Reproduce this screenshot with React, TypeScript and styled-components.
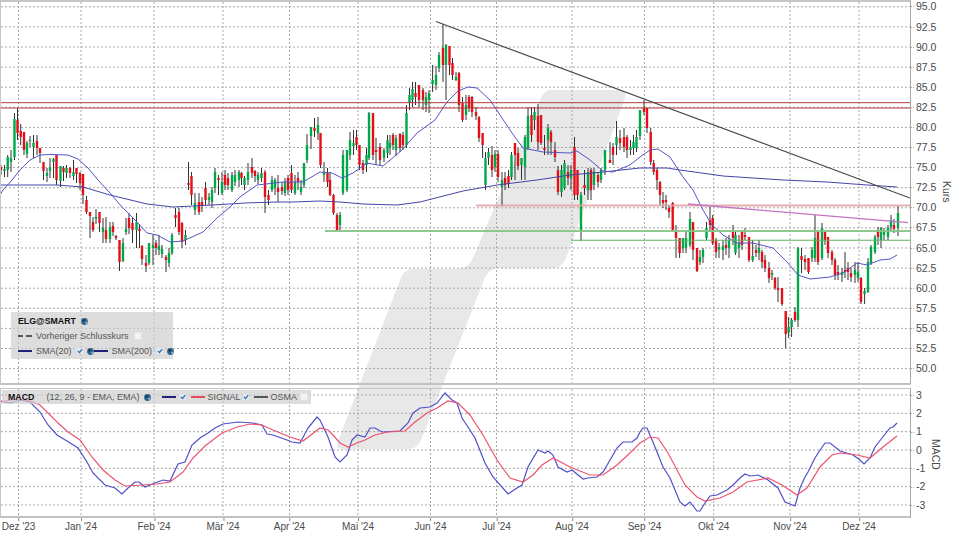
import React from 'react';
import styled, { createGlobalStyle } from 'styled-components';

const G = 1;
const R = 0;

// x, direction, body top, body bottom, wick top, wick bottom (page pixels)
const CANDLES: number[][] = [
  [1,R,167,170,165,175],[4.5,G,169,171,165,177],[7.7,G,157,170,155,177],[11,G,158,162,150,172],[14.5,G,119,157,113,160],
  [17.5,R,120,133,108,140],[20.7,R,131,137,124,145],[24,R,132,150,132,155],[27,G,143,154,141,158],[30,G,140,141,136,147],
  [33.5,G,143,147,135,158],[37,R,141,148,135,155],[40,R,148,153,148,163],[43.5,R,162,171,162,180],[47,G,173,176,168,182],
  [50,G,167,171,158,178],[53.5,G,159,162,158,178],[56.5,R,155,180,155,185],[60.5,G,166,181,166,187],[63.5,R,168,172,166,181],
  [66.5,G,168,173,165,178],[70,R,168,173,167,178],[73.5,G,172,176,160,180],[76.5,R,168,174,168,183],[80,R,173,183,172,190],
  [83,R,174,195,174,204],[86.5,R,200,212,196,214],[90,R,212,216,212,238],[93,R,222,230,217,232],[96,G,217,219,209,224],
  [99.5,R,212,223,212,232],[103,G,228,232,218,243],[106,R,230,239,217,243],[110,G,227,239,222,243],[113,R,226,232,222,236],
  [116,R,236,238,235,240],[119.5,R,240,262,240,271],[123,G,243,261,238,262],[126,G,229,232,218,235],[129,R,218,228,213,234],
  [132.5,R,223,230,217,243],[136.5,G,222,230,213,248],[139.5,R,229,231,224,248],[142,R,246,259,245,265],[146,R,263,266,255,272],
  [149,G,243,263,243,265],[153,G,245,248,235,265],[156,R,243,248,240,255],[159,G,246,250,235,255],[162,G,249,254,245,258],
  [166,R,257,260,255,272],[169,G,253,263,248,267],[172,G,235,253,233,255],[175.5,R,215,218,208,227],[179,R,212,232,208,235],
  [182,R,223,242,222,248],[185.5,G,235,240,230,245],[188.5,R,183,185,162,190],[191.5,R,176,195,172,205],[195,G,203,210,193,215],
  [199,R,202,212,193,215],[202,R,202,206,197,212],[205.5,R,188,200,182,205],[209,G,197,200,193,205],[212,G,190,202,187,208],
  [215,G,172,188,168,193],[218.5,R,178,180,175,195],[222,G,182,193,172,195],[225,R,175,185,170,190],[228,R,178,185,173,190],
  [232,G,175,190,172,192],[235,G,175,182,170,186],[239,G,172,180,170,187],[241.5,R,173,178,172,185],[244.5,G,178,185,176,190],
  [248,G,172,180,163,185],[252,R,167,173,158,178],[255,R,171,176,170,182],[258,G,175,180,172,184],[261.5,G,173,178,168,182],
  [265,R,172,197,170,213],[268.5,R,195,200,190,205],[272,G,180,190,176,192],[275,G,180,188,178,195],[278,R,188,192,175,202],
  [282,R,187,191,182,195],[285,G,182,193,178,196],[288,R,178,190,175,195],[291.5,R,173,190,165,193],[295,G,182,193,175,195],
  [298,R,178,182,172,190],[301,G,187,192,180,195],[304,G,163,185,163,188],[307,G,145,160,134,163],[311,G,127,136,127,149],
  [314.5,R,128,131,118,137],[318,G,125,133,117,140],[320.5,R,133,165,133,168],[324,G,172,175,162,182],[327.5,R,173,182,168,187],
  [330,R,180,195,172,196],[333.5,R,195,213,194,215],[337,R,215,230,213,231],[340,G,215,225,212,231],[343,G,155,193,150,195],
  [347,G,150,190,150,192],[350,G,140,155,132,160],[353.5,G,143,146,130,155],[356.5,R,137,145,130,150],[359.5,R,145,165,145,170],
  [363,R,163,170,160,174],[366.5,G,155,165,148,172],[369,G,113,158,112,160],[373,R,113,155,113,160],[376,R,150,152,138,165],
  [380,R,147,160,143,165],[384,G,150,158,148,162],[387.5,G,140,153,135,158],[390,G,143,148,135,155],[393,R,135,145,133,150],
  [396,G,138,150,135,156],[400,R,134,148,133,152],[403,R,135,145,132,150],[406.5,G,113,145,105,148],[409.5,G,95,103,88,110],
  [412.5,G,89,100,82,107],[415.5,R,93,97,82,105],[419,R,85,100,85,107],[423,R,90,100,88,110],[426,G,97,105,92,112],
  [429,G,93,100,90,113],[432.6,G,80,84,65,92],[436,G,75,85,66,90],[439,G,55,68,52,72],[443,R,48,65,24,82],
  [446,G,45,65,44,100],[449.5,R,46,65,46,75],[452.5,R,63,75,58,80],[456,G,77,80,72,81],[459,R,73,105,72,112],
  [462.5,R,103,120,97,122],[466,G,105,115,95,120],[469,R,97,108,95,112],[472,R,97,112,96,117],[476,R,112,116,107,120],
  [479,R,117,138,116,142],[482.6,R,133,145,133,158],[485.5,G,158,185,152,190],[488.5,G,152,158,148,165],[492,R,155,170,146,177],
  [495,G,154,167,150,172],[498,R,154,177,150,182],[502,G,180,187,172,206],[505,R,178,185,172,190],[508.5,R,176,184,170,188],
  [511.5,G,155,177,152,180],[515,R,143,155,143,180],[518,R,153,166,148,170],[521.5,G,158,165,158,180],[525,G,137,167,135,180],
  [528,G,116,148,107,150],[531.5,R,115,135,107,142],[534.5,G,112,120,107,130],[538,R,116,142,104,150],[541,R,115,143,115,145],
  [544.5,R,148,150,135,155],[548,G,128,140,124,155],[551,R,132,142,130,155],[555,R,150,157,142,162],[558,R,170,192,166,195],
  [561.5,G,170,192,165,197],[564.5,G,163,188,160,190],[568,R,172,178,165,185],[571,G,170,178,165,190],[574.5,R,147,195,137,200],
  [577.5,R,170,195,170,200],[581,G,195,230,192,241],[584.5,R,185,188,170,195],[588,G,172,190,168,200],[591,R,170,190,168,200],
  [594,G,172,185,168,190],[598,R,175,182,172,187],[601,G,170,180,168,183],[605,G,150,170,150,175],[610,R,160,163,142,163],
  [613,R,147,155,143,165],[616.5,G,137,145,121,155],[620,R,138,143,130,150],[624,R,137,147,128,152],[627,R,137,150,135,158],
  [630.5,G,147,150,140,155],[633.5,G,142,148,135,155],[636.5,G,137,148,130,152],[640,G,110,136,110,140],[644,R,108,112,100,115],
  [647,R,108,128,108,133],[650.7,R,132,162,128,165],[653.7,R,163,172,160,175],[657,R,170,180,168,190],[660,R,182,195,181,205],
  [663,R,200,203,192,208],[666,R,200,202,195,210],[669,R,208,212,205,218],[672.7,R,203,230,202,232],[676,R,232,238,225,258],
  [679.6,R,238,253,238,258],[683,G,238,248,238,253],[686,G,238,248,230,253],[690,G,219,245,212,247],[693,R,222,250,222,260],
  [697,R,248,271,248,272],[700,G,257,262,250,265],[703,G,250,257,248,263],[706.5,G,228,238,222,240],[710,R,220,225,207,232],
  [712.7,R,218,243,215,245],[716,R,240,252,238,258],[719,G,247,250,243,258],[723,G,246,250,240,260],[726,R,245,248,238,255],
  [729,G,240,248,235,258],[733,R,232,238,225,245],[735.5,G,235,253,232,255],[739,G,243,248,235,258],[742,R,232,245,230,250],
  [745,R,235,237,228,240],[749,R,237,260,237,262],[752.7,G,256,260,240,262],[756,R,250,253,245,257],[759,G,248,253,240,260],
  [762,R,252,262,250,268],[765,R,260,268,255,272],[769,R,268,278,262,283],[772,G,273,275,270,280],[775,R,278,288,277,290],
  [778,R,288,290,277,302],[782,R,288,304,288,306],[785.7,R,311,334,311,348],[788.6,G,327,333,317,338],[791.6,G,320,327,318,337],
  [795,R,312,320,307,322],[798,G,248,320,247,327],[801.5,R,256,260,248,273],[805,R,259,262,255,270],[808.5,R,258,272,258,274],
  [812,G,250,258,247,262],[815,G,238,258,215,262],[818,R,232,262,232,265],[822,G,228,258,223,260],[825,R,232,240,232,245],
  [828,R,237,253,237,258],[832,R,252,260,250,265],[835,R,260,275,258,280],[838,R,272,274,265,280],[842,G,272,275,268,282],
  [845,R,270,272,252,278],[848,R,268,272,262,280],[851,R,273,277,268,282],[855,G,270,275,262,283],[858,G,272,278,262,282],
  [861,R,278,302,277,304],[864.6,G,291,294,288,304],[868,G,262,292,258,293],[871,G,247,263,245,265],[875,G,237,252,235,254],
  [878,R,232,237,227,245],[881,G,228,240,227,248],[884,G,232,235,228,240],[888,G,228,237,225,240],[891,G,220,227,215,230],
  [894,R,225,229,219,233],[898,G,213,228,206,236],
];

const SMA20 = '0,195 3,190 12,180 20,170 30,160 40,155 50,154.5 68,155 78,159 88,168 98,180 110,193 122,207 137,222 147,233 157,235 170,242 183,241 203,232 217,218 230,207 240,197 257,185 283,182 303,182 320,172 332,173 342,178 353,173 367,163 383,166 402,150 417,133 435,120 447,102 458,91 468,87 477,88 490,100 500,115 512,133 523,148 543,152 570,153 577,151 590,160 603,171 613,172 630,165 640,157 650,150 658,149 670,157 683,177 693,190 703,210 712,225 723,235 737,243 753,243 773,248 787,262 798,275 810,279 830,277 843,273 857,263 867,265 880,260 890,259 897,255';
const SMA200 = '0,185 57,185 83,187 110,195 147,204 173,207 213,205 245,203 277,202 293,202 320,201 340,202 363,204 397,205 420,202 463,191 497,185 537,180 570,175 603,172 640,168 667,168 680,170 723,176 783,180 827,182 867,185 897,187';
const MACD_LINE = '0,401 10,403 20,400 30,402 40,412 48,425 57,435 67,441 78,448 87,462 93,473 105,485 115,488 122,494 128,488 135,482 139,482 145,487 155,483 163,480 170,481 178,464 185,462 192,445 200,438 208,433 215,428 223,424 238,422 253,423 262,425 267,434 273,435 287,440 292,442 300,443 308,428 317,417 320,420 328,437 335,457 340,462 347,455 352,440 357,435 365,437 370,428 375,428 382,432 400,431 408,423 413,413 420,408 430,407 437,403 445,393 452,400 457,403 462,418 468,427 475,438 485,463 493,477 508,494 517,488 522,485 528,467 538,450 545,453 548,451 553,455 558,467 567,472 572,470 583,479 588,478 597,477 603,472 617,448 623,442 632,442 637,438 640,432 643,428 647,428 655,447 663,467 670,478 680,502 685,506 690,502 697,511 700,511 705,503 710,496 717,495 727,490 733,485 740,478 745,474 750,476 758,475 768,480 778,488 785,502 795,506 800,488 805,477 808,472 815,458 820,450 825,443 830,443 840,451 853,455 860,460 864,464 870,458 875,447 882,438 890,428 893,427 897,423';
const SIGNAL_LINE = '0,402 17,399 30,401 40,405 50,415 58,423 68,432 80,440 92,457 103,470 115,480 125,486 143,485 157,484 170,482 183,472 193,458 205,446 222,433 237,427 250,424 262,425 273,430 290,437 303,441 320,428 328,430 333,435 340,443 348,447 357,443 365,440 375,435 388,432 405,431 415,422 427,413 437,408 448,401 458,403 470,415 483,435 497,460 510,478 523,482 533,475 542,465 553,458 570,467 590,475 603,475 617,465 630,453 640,443 650,437 658,438 668,453 685,485 697,497 705,501 720,498 733,492 747,482 768,478 782,485 797,495 807,488 820,467 832,455 840,453 857,455 870,458 883,447 897,436';

const MONTHS: [string, number][] = [
  ["Dez '23", 18.5], ["Jan '24", 81], ["Feb '24", 154], ["Mär '24", 223], ["Apr '24", 289.5], ["Mai '24", 358], ["Jun '24", 430.5],
  ["Jul '24", 496.5], ["Aug '24", 572], ["Sep '24", 644.5], ["Okt '24", 713.7], ["Nov '24", 790], ["Dez '24", 859],
];
const PRICES = ['95.0','92.5','90.0','87.5','85.0','82.5','80.0','77.5','75.0','72.5','70.0','67.5','65.0','62.5','60.0','57.5','55.0','52.5','50.0'];
const MACD_TICKS = ['3','2','1','0','-1','-2','-3'];

const priceY = (i: number) => 6.8 + i * 20.1;
const macdY = (i: number) => 395 + i * 18.33;

const GlobalStyle = createGlobalStyle`
  html, body {
    margin: 0;
    padding: 0;
    background: #fff;
    font-family: "Liberation Sans", Arial, sans-serif;
  }
`;

const Page = styled.div`
  position: relative;
  width: 960px;
  height: 540px;
  overflow: hidden;
  background: #fff;
`;

const Watermark = styled.svg`
  position: absolute;
  left: 0;
  top: 0;
  width: 960px;
  height: 540px;
`;

const Stack = styled.div`
  position: relative;
  display: flex;
  flex-direction: column;
`;

const Pane = styled.div<{ $height: number; $gapTop?: number }>`
  display: flex;
  height: ${p => p.$height}px;
  margin-top: ${p => p.$gapTop ?? 0}px;
`;

const Plot = styled.div<{ $borderTop: number }>`
  position: relative;
  box-sizing: border-box;
  width: 911px;
  height: 100%;
  border-top: ${p => p.$borderTop}px solid #c6c6c6;
  border-left: 1px solid #c6c6c6;
  border-right: 1px solid #a6a6a6;
  border-bottom: 2px solid #c2c2c2;
`;

const ChartSvg = styled.svg`
  display: block;
  width: 100%;
  height: 100%;
  filter: blur(0.35px);
`;

const AxisWrap = styled.div`
  flex: 1;
  display: flex;
`;

const AxisTicks = styled.div<{ $shift: number; $width: number }>`
  width: ${p => p.$width}px;
  margin-top: ${p => p.$shift}px;
  color: #4a4a4a;
  font-size: 10.5px;
`;

const AxisRow = styled.div<{ $h: number }>`
  position: relative;
  height: ${p => p.$h}px;
  line-height: ${p => p.$h}px;
  padding-left: 5px;
  &::before {
    content: '';
    position: absolute;
    left: 0;
    top: 50%;
    width: 3px;
    border-top: 1px dotted #aaa;
  }
`;

const AxisTitle = styled.div<{ $top: number }>`
  writing-mode: vertical-rl;
  margin-top: ${p => p.$top}px;
  height: fit-content;
  color: #4a4a4a;
  font-size: 10.5px;
  line-height: 11px;
`;

const DateAxis = styled.div`
  position: relative;
  height: 22px;
`;

const DateTick = styled.div<{ $x: number }>`
  position: absolute;
  left: ${p => p.$x}px;
  top: 3px;
  transform: translateX(-50%);
  color: #4a4a4a;
  font-size: 10px;
  line-height: 12px;
  white-space: nowrap;
  &::before {
    content: '';
    position: absolute;
    left: 50%;
    top: -3px;
    height: 3px;
    border-left: 1px solid #888;
  }
`;

const PriceLegend = styled.div`
  position: absolute;
  left: 10px;
  top: 310px;
  box-sizing: border-box;
  width: 162px;
  height: 47px;
  padding: 2px 0 0 7px;
  display: flex;
  flex-direction: column;
  gap: 1px;
  background: rgba(205, 205, 205, 0.68);
`;

const LegendRow = styled.div`
  display: flex;
  align-items: center;
  height: 14px;
`;

const MacdLegend = styled.div`
  position: absolute;
  left: 1px;
  top: 1px;
  box-sizing: border-box;
  width: 309px;
  height: 14px;
  padding-left: 6px;
  display: flex;
  align-items: center;
  background: rgba(205, 205, 205, 0.68);
`;

const Label = styled.span<{ $bold?: boolean; $left?: number }>`
  margin-left: ${p => p.$left ?? 0}px;
  color: ${p => (p.$bold ? '#111' : '#555')};
  font-size: ${p => (p.$bold ? '8.8px' : '9px')};
  font-weight: ${p => (p.$bold ? 700 : 400)};
  line-height: 12px;
  white-space: nowrap;
`;

const Swatch = styled.span<{ $color: string; $left?: number }>`
  flex: none;
  width: 14px;
  height: 2px;
  margin-left: ${p => p.$left ?? 0}px;
  background: ${p => p.$color};
`;

const DashSwatch = styled.span`
  flex: none;
  width: 14px;
  height: 2px;
  background: linear-gradient(to right, #555 0 5px, transparent 5px 8px, #555 8px 14px);
`;

const EmptyBox = styled.span<{ $left?: number }>`
  flex: none;
  width: 6px;
  height: 6px;
  margin-left: ${p => p.$left ?? 0}px;
  background: #f2f2f6;
  border: 0.5px solid #e4e4e8;
`;

const IconSvg = styled.svg<{ $left?: number }>`
  flex: none;
  margin-left: ${p => p.$left ?? 0}px;
`;

const Globe: React.FC<{ left?: number }> = ({ left }) => (
  <IconSvg $left={left} width="7" height="7" viewBox="0 0 7 7">
    <circle cx="3.5" cy="3.5" r="3.4" fill="#2f6690" />
    <path d="M1 2 L3 1 L4 2.5 L2.5 4 Z" fill="#1d3444" />
    <path d="M4.5 4 L6.4 3.5 L6 5.5 L4.5 6 Z" fill="#8fc0dc" />
  </IconSvg>
);

const Check: React.FC<{ left?: number }> = ({ left }) => (
  <IconSvg $left={left} width="6" height="6" viewBox="0 0 6 6">
    <rect width="6" height="6" fill="#e6e8f0" />
    <path d="M1 3 L2.5 4.6 L5.2 1.2" fill="none" stroke="#2c6fb0" strokeWidth="1.3" />
  </IconSvg>
);

const Grid: React.FC<{ ys: number[]; top: number; bottom: number }> = ({ ys, top, bottom }) => (
  <g stroke="#a8a8a8" strokeWidth="1" strokeDasharray="2 2" fill="none">
    {ys.map(y => <line key={y} x1="1" x2="910" y1={y} y2={y} />)}
    {MONTHS.map(([name, x]) => <line key={name} x1={x} x2={x} y1={top} y2={bottom} />)}
  </g>
);

const Candle: React.FC<{ c: number[] }> = ({ c: [x, up, top, bottom, high, low] }) => (
  <g>
    <line x1={x} x2={x} y1={high} y2={low} stroke="#333" strokeWidth="1" />
    <rect x={x - 1.2} y={top} width="2.4" height={bottom - top} fill={up ? '#00a84a' : '#e40f18'} />
  </g>
);

const App: React.FC = () => (
  <>
    <GlobalStyle />
    <Page>
      <Watermark viewBox="0 0 960 540">
        <path
          d="M552 90 L620 90 Q628 90 625 98 L566 258 Q562 268 552 268 L498 268 Q489 268 484 280 L421 440 Q417 449 408 449 L342 449 Q335 449 338 441 L400 280 Q404 269 412 269 L458 269 Q468 269 473 258 L541 98 Q544 90 552 90 Z"
          fill="#e8e8e8"
        />
      </Watermark>
      <Stack>
        <Pane $height={385}>
          <Plot $borderTop={2}>
            <ChartSvg viewBox="1 2 909 381" preserveAspectRatio="none">
              <Grid ys={PRICES.map((_, i) => priceY(i))} top={2} bottom={383} />
              {CANDLES.map(c => <Candle key={c[0]} c={c} />)}
              <polyline points={SMA200} fill="none" stroke="#4444a8" strokeWidth="1" />
              <polyline points={SMA20} fill="none" stroke="#5454c4" strokeWidth="1" />
              <line x1="1" x2="910" y1="102.7" y2="102.7" stroke="#b23a3a" strokeWidth="1" />
              <line x1="1" x2="910" y1="108" y2="108" stroke="#b23a3a" strokeWidth="1" />
              <line x1="476" x2="910" y1="205.5" y2="205.5" stroke="#e6a0a0" strokeWidth="2.2" opacity="0.85" />
              <line x1="325" x2="910" y1="231" y2="231" stroke="#84c484" strokeWidth="2" opacity="0.9" />
              <line x1="571" x2="910" y1="240.3" y2="240.3" stroke="#62b262" strokeWidth="1.1" />
              <line x1="688" x2="908" y1="204" y2="222.7" stroke="#c274c2" strokeWidth="1.3" />
              <line x1="436" x2="910" y1="21.5" y2="198" stroke="#474747" strokeWidth="1.1" />
            </ChartSvg>
            <PriceLegend>
              <LegendRow>
                <Label $bold>ELG@SMART</Label>
                <Globe left={5} />
              </LegendRow>
              <LegendRow>
                <DashSwatch />
                <Label $left={4}>Vorheriger Schlusskurs</Label>
                <EmptyBox $left={5} />
              </LegendRow>
              <LegendRow>
                <Swatch $color="#20207c" />
                <Label $left={4}>SMA(20)</Label>
                <Check left={5} />
                <Globe left={4} />
                <Swatch $color="#20207c" />
                <Label $left={4}>SMA(200)</Label>
                <Check left={5} />
                <Globe left={4} />
              </LegendRow>
            </PriceLegend>
          </Plot>
          <AxisWrap>
            <AxisTicks $shift={-3.6} $width={30}>
              {PRICES.map(p => <AxisRow key={p} $h={20.1}>{p}</AxisRow>)}
            </AxisTicks>
            <AxisTitle $top={181}>Kurs</AxisTitle>
          </AxisWrap>
        </Pane>
        <Pane $height={130} $gapTop={3}>
          <Plot $borderTop={1}>
            <ChartSvg viewBox="1 389 909 127" preserveAspectRatio="none">
              <Grid ys={MACD_TICKS.map((_, i) => macdY(i))} top={389} bottom={516} />
              <polyline points={MACD_LINE} fill="none" stroke="#4f4fc8" strokeWidth="1.2" />
              <polyline points={SIGNAL_LINE} fill="none" stroke="#ec5470" strokeWidth="1.2" />
            </ChartSvg>
            <MacdLegend>
              <Label $bold>MACD</Label>
              <Label $left={12}>(12, 26, 9 - EMA, EMA)</Label>
              <Globe left={5} />
              <Swatch $color="#20207c" $left={11} />
              <Check left={4} />
              <Swatch $color="#e84a60" $left={5} />
              <Label $left={2}>SIGNAL</Label>
              <Check left={3} />
              <Swatch $color="#555" $left={5} />
              <Label $left={2}>OSMA</Label>
              <EmptyBox $left={3} />
            </MacdLegend>
          </Plot>
          <AxisWrap>
            <AxisTicks $shift={-2.2} $width={19}>
              {MACD_TICKS.map(t => <AxisRow key={t} $h={18.33}>{t}</AxisRow>)}
            </AxisTicks>
            <AxisTitle $top={51}>MACD</AxisTitle>
          </AxisWrap>
        </Pane>
        <DateAxis>
          {MONTHS.map(([name, x]) => <DateTick key={name} $x={x}>{name}</DateTick>)}
        </DateAxis>
      </Stack>
    </Page>
  </>
);

export default App;
